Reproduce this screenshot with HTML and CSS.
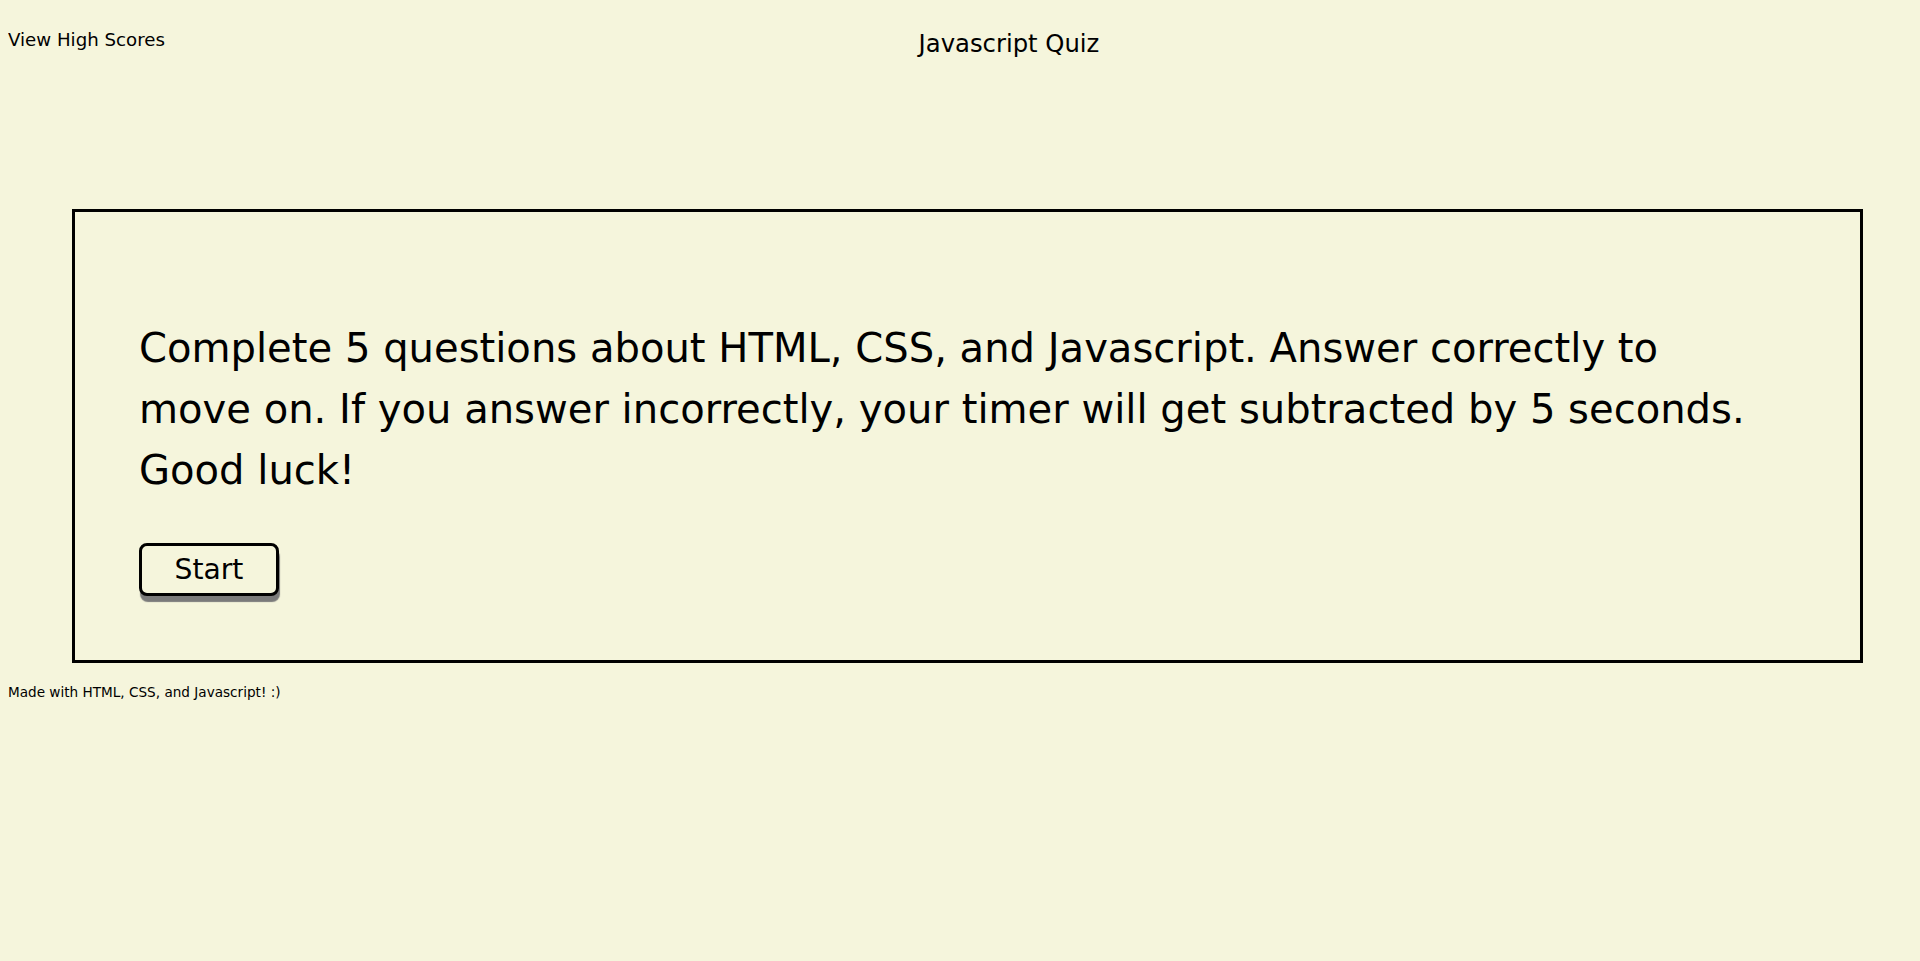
FILE: index.html
```html
<!DOCTYPE html>
<html lang="en">
<head>
<meta charset="utf-8">
<title>Javascript Quiz</title>
<link rel="stylesheet" href="styles.css">
</head>
<body>
<header class="top-bar">
  <a class="scores-link" href="#">View High Scores</a>
  <h1 class="quiz-title">Javascript Quiz</h1>
  <span class="timer"></span>
</header>
<main class="quiz-card">
  <p class="intro">Complete 5 questions about HTML, CSS, and Javascript. Answer correctly to move on. If you answer incorrectly, your timer will get subtracted by 5 seconds. Good luck!</p>
  <button class="start-btn" type="button">Start</button>
</main>
<footer class="site-footer">Made with HTML, CSS, and Javascript! :)</footer>
</body>
</html>
```

FILE: styles.css
```css
html, body {
  background: #f5f5dc;
}
body {
  margin: 8px;
  font-family: "DejaVu Sans", sans-serif;
  color: #000;
}
.top-bar {
  display: flex;
  justify-content: space-between;
  align-items: flex-start;
  padding-top: 21px;
}
.scores-link {
  font-size: 18.2px;
  line-height: 21px;
  color: #000;
  text-decoration: none;
}
.quiz-title {
  margin: 0;
  font-size: 24.3px;
  line-height: 30px;
  font-weight: normal;
}
.timer {
  width: 59px;
}
.quiz-card {
  margin: 150px 49px 0 64px;
  border: 3px solid #000;
  padding: 64px 80px 64px 64px;
}
.intro {
  margin: 42px 0 42px 0;
  font-size: 40.1px;
  line-height: 61px;
}
.start-btn {
  display: block;
  box-sizing: border-box;
  width: 140px;
  height: 53px;
  padding: 0;
  border: 3px solid #000;
  border-radius: 8px;
  background: #f5f5dc;
  color: #000;
  font-family: "DejaVu Sans", sans-serif;
  font-size: 28.2px;
  line-height: 47px;
  box-shadow: 1px 6px 1px #7a7a7a;
}
.site-footer {
  margin-top: 21px;
  font-size: 13.6px;
  line-height: 16px;
}
```
